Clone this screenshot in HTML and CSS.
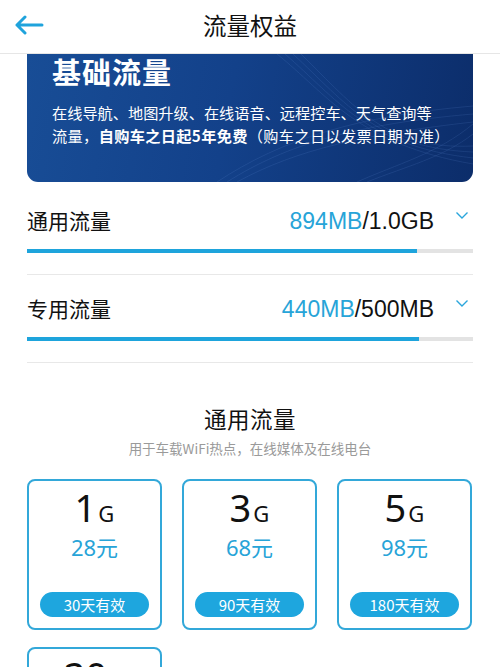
FILE: index.html
```html
<!DOCTYPE html>
<html lang="zh">
<head>
<meta charset="utf-8">
<title>流量权益</title>
<link rel="stylesheet" href="styles.css">
</head>
<body>
<header class="topbar">
  <svg class="back" width="30" height="20" viewBox="0 0 30 20"><path d="M28 10H3M11 2L3 10L11 18" fill="none" stroke="#1fa3dc" stroke-width="3" stroke-linecap="round" stroke-linejoin="round"/></svg>
  <h1 class="title">流量权益</h1>
</header>
<section class="banner">
  <svg class="waves" width="446" height="128" viewBox="0 0 446 128" preserveAspectRatio="none">
    <g fill="none" stroke="#6f9fe0" stroke-opacity="0.18" stroke-width="0.8">
      <path d="M250 0 C300 40 330 90 446 110"/>
      <path d="M258 0 C310 45 340 92 446 104"/>
      <path d="M266 0 C320 50 350 94 446 98"/>
      <path d="M274 0 C330 55 360 96 446 92"/>
      <path d="M200 128 C260 90 330 70 446 60"/>
      <path d="M190 128 C255 85 330 62 446 52"/>
      <path d="M210 128 C270 95 340 80 446 68"/>
      <path d="M330 128 C370 110 410 100 446 70"/>
      <path d="M340 128 C380 112 415 104 446 80"/>
    </g>
  </svg>
  <h2 class="banner-title">基础流量</h2>
  <div class="banner-text">
    <p class="line">在线导航、地图升级、在线语音、远程控车、天气查询等</p>
    <p class="line second">流量，<b>自购车之日起5年免费</b>（购车之日以发票日期为准）</p>
  </div>
</section>
<section class="usage">
  <div class="row first">
    <div class="row-head">
      <span class="label">通用流量</span>
      <span class="value"><em>894MB</em>/1.0GB</span>
      <svg class="chev" width="14" height="9" viewBox="0 0 14 9"><path d="M1.5 1.5L7 7L12.5 1.5" fill="none" stroke="#2aa6dc" stroke-width="1.4"/></svg>
    </div>
    <div class="bar"><div class="fill" style="width:87.4%"></div></div>
  </div>
  <div class="row">
    <div class="row-head">
      <span class="label">专用流量</span>
      <span class="value"><em>440MB</em>/500MB</span>
      <svg class="chev" width="14" height="9" viewBox="0 0 14 9"><path d="M1.5 1.5L7 7L12.5 1.5" fill="none" stroke="#2aa6dc" stroke-width="1.4"/></svg>
    </div>
    <div class="bar"><div class="fill" style="width:88%"></div></div>
  </div>
</section>
<section class="plans">
  <h3 class="plans-title">通用流量</h3>
  <p class="plans-sub">用于车载WiFi热点，在线媒体及在线电台</p>
  <div class="grid">
    <div class="card"><div class="size">1<small>G</small></div><div class="price">28元</div><div class="pill">30天有效</div></div>
    <div class="card"><div class="size">3<small>G</small></div><div class="price">68元</div><div class="pill">90天有效</div></div>
    <div class="card"><div class="size">5<small>G</small></div><div class="price">98元</div><div class="pill">180天有效</div></div>
    <div class="card"><div class="size">20<small>G</small></div><div class="price">168元</div><div class="pill">365天有效</div></div>
  </div>
</section>
</body>
</html>
```
FILE: styles.css
```css
* { box-sizing: border-box; }
html, body { margin: 0; padding: 0; }
body {
  width: 500px;
  background: #fff;
  font-family: "Noto Sans CJK SC", "Noto Sans", sans-serif;
  color: #111;
  overflow: hidden;
}
.topbar {
  height: 54px;
  display: flex;
  align-items: center;
  justify-content: center;
  position: relative;
  border-bottom: 1px solid #e6e6e6;
}
.back { position: absolute; left: 14px; top: 15px; }
.title {
  margin: 0;
  font-size: 23.5px;
  font-weight: 400;
  line-height: 30px;
  margin-top: -4px;
  color: #111;
}
.banner {
  position: relative;
  margin: 0 27px;
  height: 128px;
  border-radius: 0 0 11px 11px;
  background: linear-gradient(100deg, #184d96 0%, #13418a 45%, #0c2d6a 100%);
  color: #fff;
  padding: 0 0 0 25px;
  overflow: hidden;
}
.waves { position: absolute; left: 0; top: 0; }
.banner-title {
  position: relative;
  margin: 0;
  font-size: 29px;
  line-height: 34px;
  font-weight: 700;
  letter-spacing: 1px;
}
.banner-text {
  position: relative;
  margin-top: 13px;
  width: 403px;
  font-size: 15.2px;
  line-height: 23px;
}
.line {
  margin: 0;
  white-space: nowrap;
}
.line.second { letter-spacing: 0.35px; }
.line b { font-weight: 700; }
.usage { padding: 0 27px; }
.row {
  padding-top: 19px;
  border-bottom: 1px solid #e8e8e8;
  padding-bottom: 21px;
}
.row.first { padding-top: 24px; }
.row-head {
  display: flex;
  align-items: center;
  height: 30px;
}
.label { font-size: 21px; flex: 1; margin-top: -2px; }
.value {
  font-family: "Liberation Sans", "Noto Sans", sans-serif;
  font-size: 23px;
  color: #111;
}
.value em { font-style: normal; color: #27a4d8; }
.chev { margin-left: 21px; margin-top: -12px; margin-right: 4px; }
.bar {
  margin-top: 13px;
  height: 4px;
  background: #e3e3e3;
}
.fill { height: 100%; background: #1ea4dc; }
.plans { padding: 0 27px; text-align: center; }
.plans-title {
  margin: 40px 0 0;
  font-size: 22.5px;
  font-weight: 400;
  line-height: 30px;
  letter-spacing: 0.5px;
}
.plans-sub {
  margin: 6px 0 0;
  font-size: 13.5px;
  line-height: 18px;
  color: #9a9a9a;
}
.grid {
  margin-top: 22px;
  display: grid;
  grid-template-columns: repeat(3, 135px);
  column-gap: 20px;
  row-gap: 17px;
}
.card {
  height: 151px;
  border: 2px solid #33a8d9;
  border-radius: 8px;
  display: flex;
  flex-direction: column;
  align-items: center;
  padding-top: 6px;
}
.size {
  font-family: "Noto Sans", sans-serif;
  font-size: 38px;
  line-height: 40px;
  color: #111;
}
.size small { font-size: 22px; margin-left: 2px; }
.price {
  font-family: "Noto Sans", "Noto Sans CJK SC", sans-serif;
  font-size: 22px;
  line-height: 28px;
  color: #27a4d8;
  margin-top: 0;
}
.pill {
  margin-top: auto;
  margin-bottom: 11px;
  width: 109px;
  height: 25px;
  border-radius: 13px;
  background: #1ea6de;
  color: #fff;
  font-size: 15px;
  line-height: 25px;
}
```
